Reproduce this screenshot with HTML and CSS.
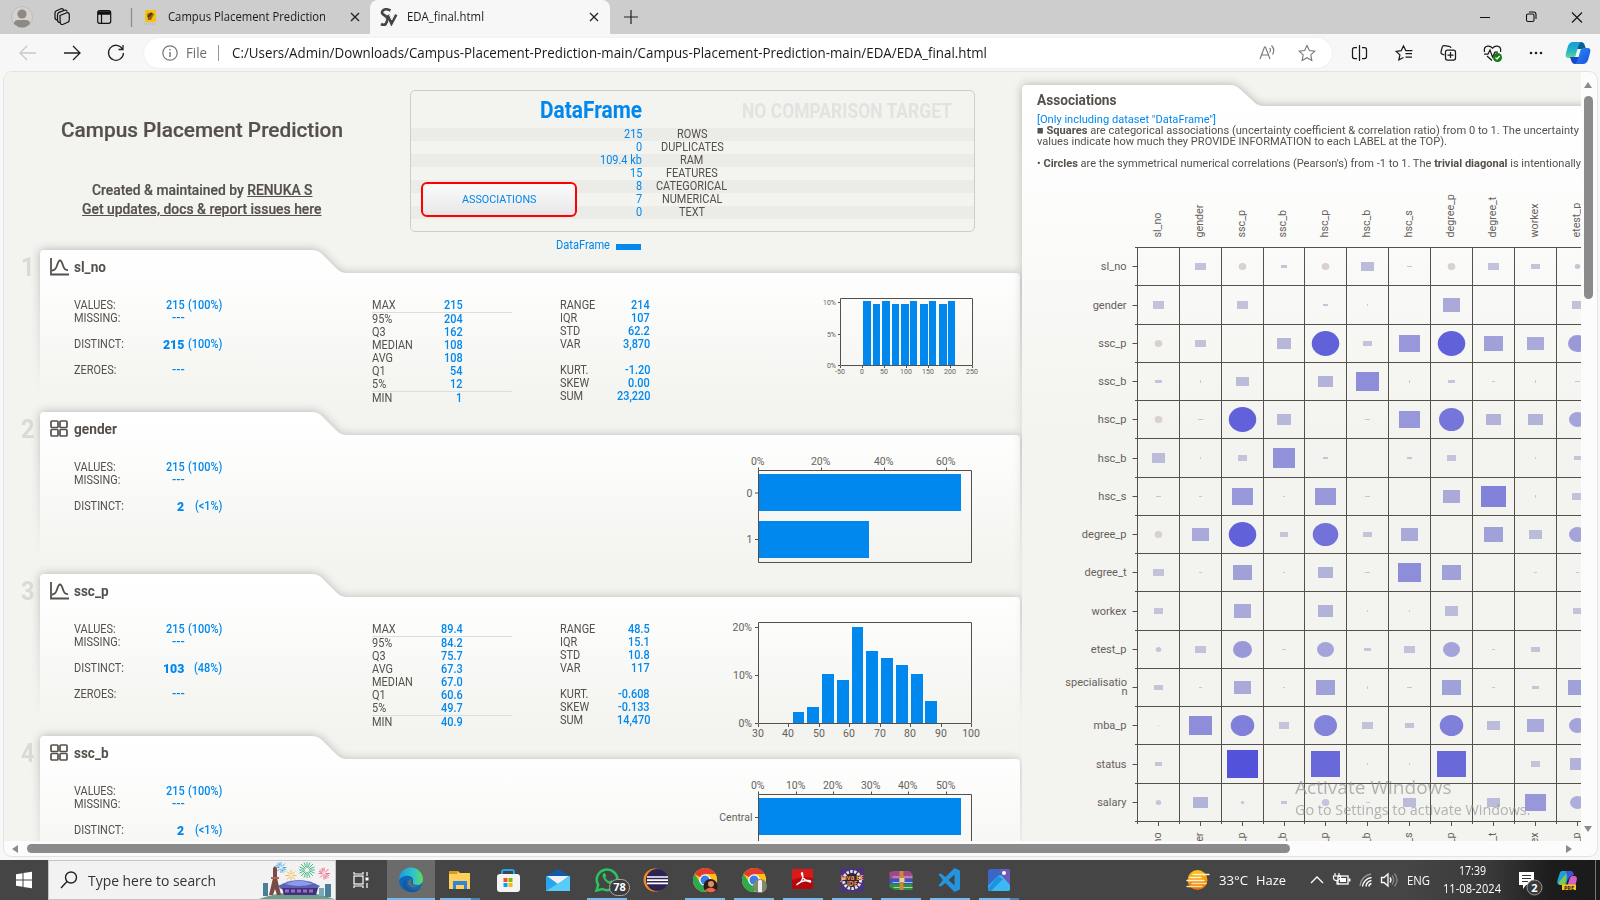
FILE: index.html
```html
<!DOCTYPE html>
<html lang="en">
<head>
<meta charset="utf-8">
<title>EDA_final.html</title>
<link rel="stylesheet" href="styles.css">
</head>
<body>
<div class="window">
  <header class="tabs">
    <svg class="tab-tools" viewBox="0 0 166 34" width="166" height="34" fill="none" stroke="#111" stroke-width="1.2">
      <circle cx="22" cy="17" r="10.5" fill="#d5d1cc" stroke="#bdb9b4" stroke-width=".8"/><circle cx="22" cy="14" r="4.6" fill="#8d8984" stroke="none"/><path d="M14 24q0-4 4-4h8q4 0 4 4q-8 7-16 0z" fill="#8d8984" stroke="none"/>
      <path d="M60 15.500l6-2.500q3-1 3.300 1.500v5q0 2-1.500 2.700l-4.600 2q-2.600 1-3-1.600z" /><path d="M60 22.500q-2.500 0-2.500-2.500v-5q0-1.800 1.600-2.600l5.400-2.200q2-.6 2.600 1.500M57.500 20q-2.500 0-2.500-2.200v-4.900q0-1.500 1.500-2.200l4.600-1.900q1.800-.6 2.500 1.200"/>
      <rect x="97.700" y="10.700" width="13" height="12.600" rx="2"/><path d="M98 13h12.500" stroke-width="3.500"/><path d="M101.500 14v9"/>
      <path d="M131.500 8v19" stroke="#8a8a8a"/>
      <path d="M145 10h11v12h-11z" fill="#f7c112" stroke="none"/><path d="M147 14q4-3 7 0l-3 6h-3z" fill="#93621a" stroke="none"/><path d="M148 17l4-4" stroke="#3a2a10"/><path d="M144 24h12" stroke="#b7a9a0" stroke-dasharray="1 1"/>
    </svg>
    <div class="tab idle"><span data-w="158">Campus Placement Prediction</span>
      <svg width="10" height="10" viewBox="0 0 10 10" stroke="#222" stroke-width="1.300"><path d="M1 1l8 8M9 1l-8 8"/></svg></div>
    <div class="tab active">
      <svg width="18" height="18" viewBox="0 0 18 18" fill="none" stroke="#444"><path d="M10.500 2.500q-5-2.500-7.500 0t1 4.500t3.500 4t-1.500 4.500t-5 .5" stroke-width="2.600"/><path d="M8 7l3.500 8L16 6.500" stroke-width="3.200"/><path d="M9.500 7l2.200 5l3-6" stroke="#f7f7f7" stroke-width="1"/></svg>
      <span data-w="77">EDA_final.html</span>
      <svg class="x" width="10" height="10" viewBox="0 0 10 10" stroke="#222" stroke-width="1.300"><path d="M1 1l8 8M9 1l-8 8"/></svg></div>
    <svg class="plus" width="14" height="14" viewBox="0 0 14 14" stroke="#222" stroke-width="1.200"><path d="M7 0v14M0 7h14"/></svg>
    <svg class="winbtns" width="120" height="34" viewBox="1480 0 120 34" fill="none" stroke="#111" stroke-width="1.100"><path d="M1480 17.500h10M1572 12.500l10 10M1582 12.500l-10 10"/><rect x="1526.500" y="14" width="7.500" height="7.500" rx="1.500"/><path d="M1529 12h4.500q2.500 0 2.500 2.500v4.500"/></svg>
  </header>
  <nav class="toolbar">
    <svg width="140" height="38" viewBox="0 34 140 38" fill="none" stroke="#222" stroke-width="1.300"><path d="M36 53h-16m7-7l-7 7l7 7" stroke="#c9c9c9"/><path d="M64 53h16m-7-7l7 7l-7 7"/><path d="M122.500 49a7.500 7.500 0 1 0 1 4M123 45v4.500h-4.500"/></svg>
    <div class="address">
      <svg width="16" height="16" viewBox="0 0 16 16" fill="none" stroke="#767676" stroke-width="1.200"><circle cx="8" cy="8" r="7.200"/><path d="M8 7v5M8 4v1.500" stroke-width="1.400"/></svg>
      <span class="scheme" data-w="21">File</span><i></i>
      <span class="url" data-w="755">C:/Users/Admin/Downloads/Campus-Placement-Prediction-main/Campus-Placement-Prediction-main/EDA/EDA_final.html</span>
      <svg class="addr-icons" width="60" height="20" viewBox="1258 43 60 20" fill="none" stroke="#777" stroke-width="1.100"><path d="M1260 59l4.500-12h1l4.500 12M1262 55h7M1269.500 48q2 2 0 4.500M1271.500 45.500q4 4 1 9"/><path d="M1307 45.500l2.400 5l5.400.7l-4 3.700l1 5.500l-4.800-2.700l-4.800 2.700l1-5.500l-4-3.700l5.400-.7z"/></svg>
    </div>
    <svg class="right-tools" width="256" height="38" viewBox="1344 34 256 38" fill="none" stroke="#1a1a1a" stroke-width="1.250">
      <path d="M1357 47.500h-2.500q-2 0-2 2v7q0 2 2 2h2.500M1362 47.500h2.500q2 0 2 2v7q0 2-2 2h-2.500M1359.500 45v16"/>
      <path d="M1403.500 57.500l-4.600 2.400l1-5l-3.700-3.500l5-.7l2.300-4.700l2.400 4.700h6.500M1405.500 53.500h6.500M1405.500 57h6.500"/>
      <path d="M1444.500 55l-2.300-.8q-1.500-.6-1.200-2.200l1.200-4.800q.5-1.700 2-1.500l5 .6q1.500.2 1.800 1.700"/><rect x="1445.500" y="50" width="10" height="10" rx="2"/><path d="M1450.500 52v6M1447.500 55h6"/>
      <path d="M1484.500 52q-1-5 3-5.800q3-.4 5 2q2-2.400 5-2q4 .8 3 5.800M1484 54h4l2-4l2.500 7l2.500-5h3M1487 56l5 4.500"/><circle cx="1497.500" cy="57.500" r="4.500" fill="#107c10" stroke="none"/><path d="M1495.500 57.500l1.500 1.500l2.700-3" stroke="#fff"/>
      <g fill="#222" stroke="none"><circle cx="1531" cy="53" r="1.300"/><circle cx="1536" cy="53" r="1.300"/><circle cx="1541" cy="53" r="1.300"/></g>
      <defs><linearGradient id="cpa" x1="0" y1="0" x2="0" y2="1"><stop offset="0" stop-color="#169ae0"/><stop offset=".6" stop-color="#25b8c5"/><stop offset="1" stop-color="#6bd68a"/></linearGradient><linearGradient id="cpb" x1="0" y1="0" x2="1" y2="1"><stop offset="0" stop-color="#2c8df0"/><stop offset="1" stop-color="#1b4fe0"/></linearGradient></defs>
      <g stroke="none"><path d="M1574 42h7q3 0 4 4l1 3h-10z" fill="#0b5e93"/><path d="M1573 42h8q-2 1-3 5l-2.500 9q-1 2-3 2h-4q-4 0-2.500-5l2-7q1.500-4 5-4z" fill="url(#cpa)"/><path d="M1582 64h-7q-3 0-4-4l-1-3h10z" fill="#1747c8"/><path d="M1583 64h-8q2-1 3-5l2.500-9q1-2 3-2h4q4 0 2.500 5l-2 7q-1.500 4-5 4z" fill="url(#cpb)"/></g>
    </svg>
  </nav>

  <main class="viewport">
    <div class="page">
      <div class="left">
        <section class="intro">
          <div class="headline">
            <h1><span data-w="282">Campus Placement Prediction</span></h1>
            <p><span data-w="220.500">Created &amp; maintained by <u>RENUKA S</u></span></p>
            <p><span data-w="239.500"><u>Get updates, docs &amp; report issues here</u></span></p>
          </div>
          <div class="summary-wrap">
            <div class="summary">
              <div class="sum-head"><b class="df"><span data-w="102">DataFrame</span></b><b class="nocomp"><span data-w="210">NO COMPARISON TARGET</span></b></div>
              <div class="sum-rows" id="sumRows"></div>
              <button class="assoc-btn"><span data-w="74.500">ASSOCIATIONS</span></button>
            </div>
            <div class="legend"><span data-w="54">DataFrame</span><i></i></div>
          </div>
        </section>
        <section class="cards" id="cards"></section>
      </div>
      <aside class="assoc">
        <svg class="folder" width="570" height="780" viewBox="1010 72 570 780"><path class="folder-shadow" filter="url(#soft)" d="M1022 840V89q0-4 4-4H1230q6 0 10 4l14 13q4 4 10 4H1600V840z"/><path fill="url(#afill)" d="M1022 860V89q0-4 4-4H1230q6 0 10 4l14 13q4 4 10 4H1600V860z"/></svg>
        <div class="assoc-text">
          <h2><span data-w="79.500">Associations</span></h2>
          <p class="blue"><span data-w="179">[Only including dataset "DataFrame"]</span></p>
          <p><span data-w="542">■ <b>Squares</b> are categorical associations (uncertainty coefficient &amp; correlation ratio) from 0 to 1. The uncertainty</span></p>
          <p><span data-w="410">values indicate how much they PROVIDE INFORMATION to each LABEL at the TOP).</span></p>
          <p>&nbsp;</p>
          <p><span data-w="544">• <b>Circles</b> are the symmetrical numerical correlations (Pearson's) from -1 to 1. The <b>trivial diagonal</b> is intentionally</span></p>
        </div>
        <svg id="matrix" class="matrix" width="559" height="666" viewBox="1022 175 559 666"></svg>
      </aside>
    </div>
    <div class="vbar"><b class="up"></b><i></i><b class="down"></b></div>
    <div class="hbar"><b class="lft"></b><i></i><b class="rgt"></b></div>
    <div class="watermark"><p class="w1"><span data-w="156.500">Activate Windows</span></p><p class="w2"><span data-w="235.500">Go to Settings to activate Windows.</span></p></div>
  </main>

  <footer class="taskbar">
    <svg class="start" width="48" height="40" viewBox="0 860 48 40" fill="#fff"><path d="M16 874.200l6.500-1v6.300H16zM23.500 873l8.500-1.200v7.700h-8.500zM16 880.500h6.500v6.300l-6.500-1zM23.500 880.500H32v7.700l-8.500-1.200z"/></svg>
    <div class="search">
      <svg width="18" height="18" viewBox="0 0 18 18" fill="none" stroke="#222" stroke-width="1.400"><circle cx="11" cy="6.500" r="5.500"/><path d="M7 10.500L1 17"/></svg>
      <span data-w="128">Type here to search</span>
      <svg class="fest" width="76" height="38" viewBox="258 861 76 38">
        <path d="M258 899q38-14 75 0z" fill="#6f9c8e"/><path d="M262 883h5v13h-5zM324 884h6v13h-6z" fill="#4a7f97"/><path d="M318 888h5v8h-5z" fill="#7aa8b8"/>
        <path d="M272 868l2-2l2 2v10l4 17h-4l-2-6l-2 6h-4l4-17z" fill="#7a4b45"/><path d="M270 877h8v2h-8z" fill="#b0635a"/>
        <path d="M277 886q21-12 42 0l-3 3h-36z" fill="#5a62b8"/><path d="M284 884q14-7 28 0q-14 4-28 0z" fill="#8c9be8"/><path d="M281 888h36l-2 7h-32z" fill="#3d3478"/><path d="M284 891h4m2 0h4m2 0h4m2 0h4m2 0h4" stroke="#a469c8" stroke-width="3"/>
        <g fill="none"><path stroke="#4aa3e0" stroke-width=".9" d="M280 862v4m0 3v4M274.500 867.500h4m3 0h4M276 863.500l3 3m2 2l3 3M284 863.500l-3 3m-2 2l-3 3M277.700 862.300l1.200 3M282.300 872.700l-1.200-3M274.800 865.300l3 1.200M285.200 869.700l-3-1.200"/>
        <path stroke="#35b57a" stroke-width=".9" d="M306 862v6m0 4v6M298 870h6m4 0h6M300 864l4.500 4.500m3 3L312 876M312 864l-4.500 4.500m-3 3L300 876M303 862.500l2 5M309 877.500l-2-5M309 862.500l-2 5M303 877.500l2-5M298.500 867l5 2M313.500 873l-5-2M313.500 867l-5 2M298.500 873l5-2"/>
        <path stroke="#f2b84b" stroke-width="1" d="M290 870v4m0 3v4M284.500 875.500h4m3 0h4M286 871.500l3 3m2 2l3 3M294 871.500l-3 3m-2 2l-3 3"/>
        <path stroke="#ef5f78" stroke-width=".9" d="M323 867.500v4m0 3v5M317.500 873.500h4m3 0h4.500M319 869.500l3 3m2 2l3.500 3.500M327.500 869l-3.500 3.500m-2 2l-3 3M320.800 868l1.200 3M325.200 879l-1.200-3M317.800 871.300l3 1.200M328.200 875.700l-3-1.200"/></g>
      </svg>
    </div>
    <svg class="apps" width="849" height="40" viewBox="336 860 849 40">
      <defs>
        <linearGradient id="eg" x1="0" y1="0" x2="1" y2="0"><stop offset="0" stop-color="#1b9be0"/><stop offset=".6" stop-color="#2fc4c9"/><stop offset="1" stop-color="#5fdc5a"/></linearGradient>
        <linearGradient id="wx" x1="0" y1="0" x2="0" y2="1"><stop offset="0" stop-color="#ffc814"/><stop offset="1" stop-color="#ea6a10"/></linearGradient>
        <g id="chrome"><circle r="12" fill="#fbc116"/><path d="M0 0L-10.400-6A12 12 0 0 1 10.400-6z" fill="#e33b2e"/><path d="M-10.400-6A12 12 0 0 0 0 12L5.200 3L-4 4z" fill="#2da94f"/><path d="M0-6H10.400A12 12 0 0 1 0 12L5.200 3z" fill="#fbc116"/><circle r="5.800" fill="#fff"/><circle r="4.500" fill="#3b7ded"/></g>
      </defs>
      <g fill="none" stroke="#fff" stroke-width="1.200"><rect x="354" y="876" width="9" height="8"/><path d="M354 872v2h9v-2M354 888v-2h9v2M367 872v4M367 883v5"/><path d="M367 877.500v3" stroke-width="3"/></g>
      <path d="M387 860h48v40h-48z" fill="#6b6b6b"/>
      <circle cx="411" cy="880" r="12" fill="#0f67b5"/><path d="M399 880a12 12 0 0 1 24-1q0 6-6 6q-5 0-4-3q1-5-4-6q-6-1-10 4z" fill="url(#eg)"/><path d="M406 880q-1 8 7 10q4 1 8-2q-4 5-11 4q-8-3-7-9q1-3 3-3z" fill="#1656a0"/><path d="M412 879q-1 3-1 4q2 4 9 2q-8 5-12-1q-1-4 4-5z" fill="#6b6b6b"/>
      <path d="M449 871h9l2 2h10v16h-21z" fill="#ffd05c"/><path d="M449 871h9l-1 3h-8z" fill="#d99a20"/><path d="M453 881h14v8h-3v-4h-8v4h-3z" fill="#2f86d8"/>
      <path d="M502 875v-3q0-2 2-2h8q2 0 2 2v3" fill="none" stroke="#22a5ec" stroke-width="2"/><rect x="497" y="874" width="23" height="18" rx="3" fill="#f4f4f4"/><path d="M503.500 878h4v4h-4z" fill="#f25022"/><path d="M508.500 878h4v4h-4z" fill="#7fba00"/><path d="M503.500 883h4v4h-4z" fill="#00a4ef"/><path d="M508.500 883h4v4h-4z" fill="#ffb900"/>
      <path d="M546 876l12-7l12 7z" fill="#0f5cab"/><path d="M546 876h24v15h-24z" fill="#27a5ea"/><path d="M547 876h22l-11 8z" fill="#f2f2f2"/><path d="M546 891l24-15v15z" fill="#58ccf8"/>
      <path d="M596.500 890.500l1.700-5.500a10.300 10.300 0 1 1 4.300 4z" fill="none" stroke="#28c65a" stroke-width="2.500"/><path d="M603 874q1-2 2.500 0l.7 2l-1 1.500q1.500 3 4.300 4l1.500-1.200l2.500 1q1 1-1 2.400q-3 1.500-7.500-3q-3.600-4.700-2-6.700z" fill="#28c65a"/><rect x="609.500" y="879.500" width="20" height="16" rx="8" fill="#3c3c3c" stroke="#aaa"/><text x="619.500" y="891" class="badge" text-anchor="middle">78</text>
      <circle cx="655" cy="880" r="11.500" fill="#f28a22"/><circle cx="657" cy="880" r="11" fill="#2d2354"/><path d="M647 877h21M647 880.200h21M647 883.400h21" stroke="#fff" stroke-width="1.700"/>
      <use href="#chrome" x="705" y="880"/><circle cx="710.500" cy="886" r="7" fill="#2c1a18"/><circle cx="711" cy="884" r="3" fill="#d9906d"/><path d="M705 890q6-5 11 0q-5 5-11 0z" fill="#e46a4a"/>
      <use href="#chrome" x="754" y="880"/><circle cx="760" cy="886" r="7" fill="#7e8a6c"/><path d="M758 881q2.500-3 4 0v11h-4z" fill="#f1ecf2"/>
      <path d="M792 869h21v20h-21z" fill="#b5080b"/><path d="M792 869h21v9q-11-2-21 2z" fill="#d91a18"/><path d="M796.500 885q8-4 6-12q-1-1-1 1q2 7 9 8q1-2-4-1.500q-6 .5-10 4.500z" fill="none" stroke="#fff" stroke-width="1.300"/>
      <path d="M840 868h24v24h-24z" fill="#4b357a"/><circle cx="852" cy="880" r="8.500" fill="#2a2340" stroke="#e4e4e4" stroke-width="3" stroke-dasharray="2.500 1.300"/><text x="852" y="879.500" class="jee" text-anchor="middle" textLength="23" lengthAdjust="spacingAndGlyphs">Java EE</text><text x="852" y="885.500" class="jee" text-anchor="middle">IDE</text>
      <g transform="translate(11.500 0)"><path d="M878 872l5-1h15l3 3v5h-23z" fill="#a0488c"/><path d="M878 879h23v5h-23z" fill="#3556c4"/><path d="M878 884h23v6h-18l-5-3z" fill="#2f8f43"/><path d="M881 877h20M881 882.500h20M882 887.500h19" stroke="#ddd" stroke-width=".8"/><path d="M888 871h4v19h-4z" fill="#c98a3a"/><path d="M888 878h5v4h-5z" fill="#f0d48c"/></g>
      <path d="M956 868l5.500 2.500v19l-5.500 2.500l-9-9l-5 3.800l-2-1.300l4.500-5.500l-4.500-5.500l2-1.300l5 3.800zM956 874.500l-6 5.500l6 5.500z" fill="#2394e0" fill-rule="evenodd" transform="translate(-1.500 0)"/>
      <g transform="translate(-14 0)"><rect x="1002" y="869" width="22" height="22" rx="2.500" fill="#3a66c8"/><path d="M1013 869h9q2 0 2 2v14l-7-5z" fill="#6e58b8"/><path d="M1002 886l10-10q2-1.500 4 0l8 9v4q0 2-2 2h-18q-2 0-2-2z" fill="#3cb9f0"/><path d="M1002 888l10-12l5 3l-12 12q-3 0-3-3z" fill="#1c93e0"/><circle cx="1018" cy="873" r="2" fill="#fff"/></g>
      <path d="M387 899h48M440 899h31M587 899h40M685 899h40M734 899h40M783 899h40M832 899h40M881 899h40M930 899h40M979 899h31" stroke="#76b9ed" stroke-width="2"/><path d="M471 899h9M1010 899h9" stroke="#4d82ad" stroke-width="2"/>
    </svg>
    <div class="weather"><svg width="26" height="24" viewBox="1185 868 26 24"><circle cx="1197.500" cy="880" r="10" fill="url(#wx)"/><path d="M1193 874.500h16M1187 880.500h17M1190 877.500h11" stroke="#fff3cf" stroke-width="1.400" stroke-linecap="round"/><path d="M1187 886.500h15M1192 883.500h14" stroke="#f8dfa0" stroke-width="1.300" stroke-linecap="round"/></svg>
      <span data-w="29">33°C</span><span data-w="30">Haze</span></div>
    <svg class="tray" width="92" height="40" viewBox="1306 860 92 40" fill="none" stroke="#fff" stroke-width="1.300"><path d="M1311 883l6-6l6 6"/><rect x="1338" y="876" width="10" height="8"/><path d="M1349.500 878.500v3" stroke-width="2"/><path d="M1340 878h6v4h-6z" fill="#fff" stroke="none"/><path d="M1335 873v3m4-3v3m-5.500 0h7v2q-3 3-3.500 2.500q-3.500 0-3.500-2.500zM1337 880v4h2" stroke-width="1.200"/><g stroke-width="1.400"><path d="M1360 886a13 13 0 0 1 11-12" stroke="#999"/><path d="M1362.500 886.500a10 10 0 0 1 9-9M1366 886.500a6 6 0 0 1 5.500-6M1369 886.500a3 3 0 0 1 2.500-3"/></g><path d="M1381.500 877.500h2.500l4-3.500v12l-4-3.500h-2.500z"/><path d="M1390 877.500q2 2.500 0 5"/><path d="M1392 875.500q3.500 4.500 0 9M1394.500 873.500q5 6.500 0 13" stroke="#888"/></svg>
    <span class="lang" data-w="23">ENG</span>
    <div class="clock"><span data-w="27">17:39</span><span data-w="58">11-08-2024</span></div>
    <svg class="endicons" width="88" height="40" viewBox="1512 860 88 40"><path d="M1519 872h15v13h-8l-3 4v-4h-4z" fill="#fff"/><path d="M1522 875.500h9M1522 878.500h9M1522 881.500h6" stroke="#333"/><circle cx="1534.500" cy="887.500" r="7.500" fill="#3a3a3a" stroke="#999"/><text x="1534.500" y="891.500" class="badge" text-anchor="middle">2</text>
      <path d="M1562 871h8l-4 14h-5q-5 0-3.500-5l2-6q.5-3 2.500-3z" fill="#1fa0d8"/><path d="M1559 882l8-9l-2 12h-4q-3 0-2-3z" fill="#7fca4a"/><path d="M1572 876h2q4 0 2.500 5l-1 4h-8l2-6q1-3 2.500-3z" fill="#d45fc8"/><path d="M1566 871h5q2 0 3 4l-3 1q-2 1-3 4z" fill="#3a57d8"/><path d="M1562 884.500h14v5.500h-14z" fill="#ffc21a"/><text x="1569" y="889.500" class="pre" text-anchor="middle">PRE</text><path d="M1595.500 860v40" stroke="#777"/></svg>
  </footer>
</div>
<svg width="0" height="0" class="defs"><defs>
  <filter id="soft" x="-10%" y="-10%" width="120%" height="120%"><feGaussianBlur stdDeviation="5"/></filter>
  <linearGradient id="cfill" x1="0" y1="0" x2="0" y2="1"><stop offset="0" stop-color="#fff"/><stop offset=".15" stop-color="#fefefe"/><stop offset=".95" stop-color="#f3f3ef"/></linearGradient>
  <linearGradient id="cshadow" x1="0" y1="0" x2="0" y2="1"><stop offset="0" stop-color="#000" stop-opacity=".28"/><stop offset=".9" stop-color="#000" stop-opacity="0"/></linearGradient>
  <linearGradient id="afill" gradientUnits="userSpaceOnUse" x1="0" y1="85" x2="0" y2="430"><stop offset="0" stop-color="#fff"/><stop offset=".2" stop-color="#fefefe"/><stop offset="1" stop-color="#f3f3ef"/></linearGradient>
</defs></svg>
<script src="script.js"></script>
</body>
</html>
```
FILE: styles.css
```css
* { box-sizing: border-box; }
html, body { margin: 0; height: 100%; overflow: hidden; }
body { font-family: Roboto, "Liberation Sans", sans-serif; color: #55504b; }
h1, h2, p { margin: 0; }
svg { display: block; flex: none; }
.defs { position: absolute; }
.window { width: 1600px; height: 900px; display: flex; flex-direction: column; background: #f7f7f7; overflow: hidden; }
.sq { display: inline-block; white-space: nowrap; }
.sq > span { display: inline-block; transform-origin: 0 50%; }

.tabs { height: 34px; flex: none; display: flex; align-items: center; background: #cdcdcd; font: 12.500px "Open Sans", sans-serif; color: #1b1b1b; }
.tab { display: flex; align-items: center; height: 34px; }
.tab .sq { margin-top: -1px; }
.idle { width: 204px; padding-left: 2px; gap: 24px; }
.active { width: 240px; background: #f7f7f7; border-radius: 8px 8px 0 0; padding-left: 10px; gap: 9px; }
.active .x { margin-left: 96px; }
.plus { margin-left: 14px; }
.winbtns { margin-left: auto; }

.toolbar { height: 38px; flex: none; display: flex; align-items: center; }
.address { margin-left: 4px; width: 1188px; height: 30px; border-radius: 15px; background: #fff; display: flex; align-items: center; padding-left: 18px; font: 14.500px "Open Sans", sans-serif; color: #1b1b1b; box-shadow: 0 0 2px #e4e4e4; }
.address .sq { margin-top: -1px; }
.scheme { margin-left: 8px; color: #6c6c6c; }
.address i { width: 1px; height: 16px; background: #999; margin: 0 13px 0 11px; }
.addr-icons { margin-left: auto; margin-right: 14px; }
.right-tools { margin-left: 12px; }

.viewport { position: relative; height: 784px; margin: 0 3px 0 4px; background: #fcfcfc; border-radius: 8px; overflow: hidden; display: grid; grid-template: 769px 15px / 1577px 16px; flex: none; box-shadow: 0 0 0 1px #e3e3e3; }
.page { background: #f3f3ef; overflow: hidden; display: flex; }
.left { width: 1018px; flex: none; }
.intro { display: flex; height: 178px; }
.headline { width: 396px; flex: none; padding-top: 43px; text-align: center; -webkit-text-stroke: .2px; }
.headline h1 { font-size: 21px; font-weight: 500; line-height: 30px; }
.headline p { font-size: 14.500px; font-weight: 500; line-height: 19px; }
.headline h1 + p { margin-top: 36px; }
.summary-wrap { padding: 18px 0 0 10px; }
.summary { position: relative; width: 565px; height: 142px; border: 1px solid #d2cbc8; border-radius: 5px; }
.sum-head { display: flex; height: 37px; line-height: 40px; }
.df { width: 231px; text-align: right; font-size: 23px; color: #0088ee; }
.nocomp { width: 310px; text-align: right; font-size: 20px; color: #e2e2e1; }
.sum-rows div { display: grid; grid-template-columns: 231px 100px; height: 13px; line-height: 13px; font-size: 12px; }
.sum-rows div:nth-child(odd) { background: #ebebe8; }
.sum-rows div > :first-child { text-align: right; color: #0088ee; }
.sum-rows div > :last-child { text-align: center; }
.assoc-btn { position: absolute; left: 10px; top: 91px; width: 156px; height: 35px; border: 2px solid #f00; border-radius: 6px; background: linear-gradient(#fbfbfb, #e7e7e7); color: #0088ee; font: 11px Roboto, sans-serif; padding: 0; }
.legend { display: flex; align-items: center; gap: 6px; padding-left: 146px; margin-top: 5px; font-size: 12px; line-height: 17px; color: #0088ee; }
.legend i { width: 25px; height: 6px; background: #0088ee; margin-top: 3px; }

.cards { display: grid; grid-auto-rows: 162px; }
.card { position: relative; display: grid; grid-template-columns: 46px 24px 298px 188px 90px 1fr; grid-template-rows: 49px 1fr; }
.folder { position: absolute; left: 16px; top: -20px; overflow: visible; }
.assoc .folder { left: -12px; top: 0; }
.card > .folder { left: 36px; top: 0; }
.folder-shadow { fill: url(#cshadow); }
.num { grid-column: 1; grid-row: 1; padding-left: 17px; font-size: 26px; font-weight: 700; color: #d9d9d8; line-height: 35px; position: relative; }
.name { grid-column: 2 / -1; grid-row: 1; position: relative; display: flex; gap: 5px; font-size: 15.500px; font-weight: 700; line-height: 34px; }
.name svg { margin-top: 8px; }
.col { position: relative; font-size: 12px; line-height: 13px; color: #55504b; }
.row { display: grid; height: 13px; }
.a { grid-column: 3; grid-row: 2; }
.a .row { grid-template-columns: 60px 50.500px 37.500px; }
.b { grid-column: 4; grid-row: 2; width: 140px; }
.b .row { grid-template-columns: 45px 45.500px; }
.c { grid-column: 5; grid-row: 2; }
.c .row { grid-template-columns: 45px 45px; }
.v { text-align: right; color: #0088ee; }
.col .v { font-weight: 500; }
.col .big { font-weight: 900; font-size: 13.500px; }
.rule { border-bottom: 1px solid #ddd; height: 14px; }
.plot { grid-column: 6; grid-row: 1 / 3; position: relative; }
.plot svg { overflow: visible; }
.plot text, .matrix text { font-family: Roboto, sans-serif; fill: #66615c; }
.plot text { font-size: 10.500px; }
.plot text.s { font-size: 7px; }
.matrix text { font-size: 11px; }
.matrix text.up { font-size: 10.700px; }

.assoc { position: relative; width: 559px; flex: none; }
.assoc-text { position: relative; padding: 18px 0 0 15px; height: 103px; font-size: 11.500px; line-height: 11px; white-space: nowrap; }
.assoc-text h2 { font-size: 15px; line-height: 20px; margin-bottom: 3px; }
.assoc-text .blue { color: #0088ee; line-height: 12px; }
.matrix { position: relative; }

.vbar { display: flex; flex-direction: column; align-items: center; padding: 10px 2px 0 0; }
.vbar i { width: 9px; height: 203px; border-radius: 5px; background: #8b8b8b; margin-top: 8px; }
.vbar b, .hbar b { border: 4.500px solid transparent; }
.vbar .up { border-top: 0; border-bottom: 6px solid #8b8b8b; }
.vbar .down { border-bottom: 0; border-top: 6px solid #8b8b8b; margin-top: auto; margin-bottom: 9px; }
.hbar { grid-column: 1 / 3; display: flex; align-items: center; padding-left: 8px; }
.hbar i { width: 1263px; height: 9px; border-radius: 5px; background: #8b8b8b; margin: -1px 276px 0 9px; }
.hbar .lft { border-left: 0; border-right: 6px solid #8b8b8b; }
.hbar .rgt { border-right: 0; border-left: 6px solid #8b8b8b; }
.watermark { position: absolute; left: 1291px; top: 700px; color: rgba(150,150,150,.7); font-family: "Open Sans", sans-serif; white-space: nowrap; }
.w1 { font-size: 18.500px; line-height: 30px; }
.w2 { font-size: 15px; line-height: 15px; }

.taskbar { margin-top: 4px; height: 40px; flex: none; display: flex; align-items: center; background: linear-gradient(90deg, #454545 0, #454545 88%, #3a3a3a 93%, #1c1c1c 97%, #1a1a1a); color: #fff; font: 13px "Open Sans", sans-serif; }
.search { width: 288px; flex: none; height: 40px; background: #f2f2f2; border: 1px solid #c4c4c4; display: flex; align-items: center; padding-left: 11px; gap: 10px; color: #333; font-size: 15px; }
.fest { margin-left: auto; }
.badge { font: 700 11px "Open Sans", sans-serif; fill: #fff; }
.jee { font: 700 6.500px "Open Sans", sans-serif; fill: #f29340; }
.pre { font: 700 5.500px "Open Sans", sans-serif; fill: #222; }
.weather { display: flex; align-items: center; gap: 8px; }
.tray { margin-left: 20px; }
.lang { margin-left: 9px; }
.clock { width: 80px; margin-left: 2px; display: flex; flex-direction: column; align-items: center; font-size: 12px; line-height: 18px; }
.endicons { margin-left: auto; }
```
FILE: script.js
```js
const q = (t, cls = '') => `<span class="${cls}" data-s="${t === '---' ? 1.05 : .91}">${t}</span>`;

document.getElementById('sumRows').innerHTML = [
  ['215', 'ROWS'], ['0', 'DUPLICATES'], ['109.4 kb', 'RAM'], ['15', 'FEATURES'],
  ['8', 'CATEGORICAL'], ['7', 'NUMERICAL'], ['0', 'TEXT']
].map(r => `<div><span>${q(r[0])}</span><span>${q(r[1])}</span></div>`).join('');

/* Charts are described in page coordinates; each svg's viewBox selects its card. */
const INK = '#55504b', BLUE = '#0088ee';
const line = d => `<path d="${d}" fill="none" stroke="${INK}"/>`;
const label = (x, y, t, a = 'middle', c = '') => `<text x="${x}" y="${y}" text-anchor="${a}" class="${c}">${t}</text>`;
const bar = (x, y, w, h) => `<rect x="${x}" y="${y}" width="${w}" height="${h}" fill="${BLUE}"/>`;

function chart1() {
  const xs = [863, 873, 882, 892, 901, 910, 920, 929, 939, 948], hi = [1, 0, 1, 0, 0, 1, 0, 1, 0, 1];
  let s = xs.map((x, i) => bar(x, hi[i] ? 301 : 304, i % 2 ? 7 : 8, hi[i] ? 64.500 : 61.500)).join('');
  s += line('M840.500 298.500H972.500V365.500H840.500zM838 302.500h2M838 334.500h2M838 365.500h2');
  [840.500, 862.500, 884.500, 906.500, 928.500, 950.500, 972.500].forEach((x, i) => s += line(`M${x} 366v2`) + label(x - .5, 374, -50 + 50 * i, 'middle', 's'));
  return s + label(836, 305, '10%', 'end', 's') + label(836, 337, '5%', 'end', 's') + label(836, 368, '0%', 'end', 's');
}
function hbars(top, ticks, rows, step) {
  let s = rows.map(r => bar(758.500, top + r[1], r[2], 37)).join('');
  s += step === 20 ? line(`M758.500 ${top}H971.500V${top + 92}H758.500z`) : line(`M758.500 841V${top}H971.500V841`);
  ticks.forEach((x, i) => s += line(`M${x} ${top - 3}v3`) + label(x - .8, top - 5.500, i * step + '%'));
  rows.forEach(r => s += line(`M755 ${top + r[3]}h3`) + label(752.500, top + r[3] + 3.500, r[0], 'end'));
  return s;
}
function chart3() {
  let s = [[793, 11, 712], [807, 12, 707], [822, 12, 674], [837, 12, 680], [852, 11, 627], [866, 12, 651], [881, 12, 658], [896, 12, 665], [911, 12, 674], [925, 12, 701]]
    .map(b => bar(b[0], b[2], b[1], 723.500 - b[2])).join('');
  s += line('M758.500 622.500H971.500V723.500H758.500zM755 627.500h3M755 675.500h3M755 723.500h3');
  [758.500, 788.500, 819.500, 849.500, 880.500, 910.500, 941.500, 971.500].forEach((x, i) => s += line(`M${x} 724v3`) + label(x - .5, 737, 30 + i * 10));
  return s + label(752, 631, '20%', 'end') + label(752.500, 679, '10%', 'end') + label(752, 727, '0%', 'end');
}

const NUM = `<svg width="19" height="18" viewBox="0 0 19 18" fill="none" stroke="${INK}" stroke-width="1.800"><path d="M1 0v16.500h18M2 12.500q3.500 0 5-5t3-5t3 5t5 4.500"/></svg>`;
const CAT = `<svg width="19" height="18" viewBox="0 0 19 18" fill="none" stroke="${INK}" stroke-width="1.700"><rect x="1" y="1" width="7" height="6.500" rx="1"/><rect x="10" y="1" width="7" height="6.500" rx="1"/><rect x="1" y="9.500" width="7" height="6.500" rx="1"/><rect x="10" y="9.500" width="7" height="6.500" rx="1"/></svg>`;

const cards = [
  { name: 'sl_no', w: 32, icon: NUM, distinct: ['215', '(100%)'], zero: 1, plot: chart1(),
    b: [['MAX', '215'], ['95%', '204'], ['Q3', '162'], ['MEDIAN', '108'], ['AVG', '108'], ['Q1', '54'], ['5%', '12'], ['MIN', '1']],
    c: [['RANGE', '214'], ['IQR', '107'], ['STD', '62.2'], ['VAR', '3,870'], ['', ''], ['KURT.', '-1.20'], ['SKEW', '0.00'], ['SUM', '23,220']] },
  { name: 'gender', w: 43, icon: CAT, distinct: ['2', '(&lt;1%)'], plot: hbars(470.500, [758.500, 821.500, 884.500, 946.500], [['0', 3.500, 202.500, 22.500], ['1', 50.500, 110.500, 69]], 20) },
  { name: 'ssc_p', w: 34.500, icon: NUM, distinct: ['103', '(48%)'], zero: 1, plot: chart3(),
    b: [['MAX', '89.4'], ['95%', '84.2'], ['Q3', '75.7'], ['AVG', '67.3'], ['MEDIAN', '67.0'], ['Q1', '60.6'], ['5%', '49.7'], ['MIN', '40.9']],
    c: [['RANGE', '48.5'], ['IQR', '15.1'], ['STD', '10.8'], ['VAR', '117'], ['', ''], ['KURT.', '-0.608'], ['SKEW', '-0.133'], ['SUM', '14,470']] },
  { name: 'ssc_b', w: 34.500, icon: CAT, distinct: ['2', '(&lt;1%)'], plot: hbars(794.500, [758.500, 796.500, 833.500, 871.500, 908.500, 946.500], [['Central', 3.500, 202.500, 23]], 10) }
];
const SHAPE = 'M0 162V4q0-4 4-4H272q6 0 10 4l15 15q4 4 10 4H976q4 0 4 4V162z';
document.getElementById('cards').innerHTML = cards.map((c, i) => {
  const rowA = (l, v, p = '', k = '') => `<div class="row"><span>${q(l)}</span><span class="v ${k}">${q(v)}</span><span class="v">${q(p)}</span></div>`;
  const gap = '<div class="row"></div>';
  const pair = (r, k = '') => `<div class="row ${k}"><span>${q(r[0])}</span><span class="v">${q(r[1])}</span></div>`;
  return `<article class="card">
    <svg class="folder" width="980" height="162" viewBox="0 0 980 162"><path class="folder-shadow" filter="url(#soft)" d="${SHAPE}"/><path fill="url(#cfill)" d="${SHAPE}"/></svg>
    <div class="num">${q(i + 1)}</div>
    <div class="name">${c.icon}<span data-w="${c.w}">${c.name}</span></div>
    <div class="col a">${rowA('VALUES:', '215', '(100%)')}${rowA('MISSING:', '---')}${gap}${rowA('DISTINCT:', c.distinct[0], c.distinct[1], 'big')}${gap}${c.zero ? rowA('ZEROES:', '---') : ''}</div>
    ${c.b ? `<div class="col b">${c.b.map((r, j) => pair(r, j === 0 || j === 6 ? 'rule' : '')).join('')}</div><div class="col c">${c.c.map(r => pair(r)).join('')}</div>` : ''}
    <div class="plot"><svg width="360" height="162" viewBox="650 ${250 + 162 * i} 360 162">${c.plot}</svg></div>
  </article>`;
}).join('');

/* Association matrix: "WxH" rectangle, "cWxH" circle, "g" near-zero circle. */
const names = ['sl_no', 'gender', 'ssc_p', 'ssc_b', 'hsc_p', 'hsc_b', 'hsc_s', 'degree_p', 'degree_t', 'workex', 'etest_p', 'specialisation', 'mba_p', 'status', 'salary'];
const grid = `
- 11x7 g 6x3 g 13x9 5x1 g 11x7 9x5 c5.5x5
11x8 - 11x8 - 5x2 1x2 - 17x14 - - 11x8
g 11x7 - 14x11 c27.5x25 9x5 21x17 c27.5x25.1 19x15 17x13 c19x17
7x3 1x3 13x9 - 15x11 23x19 1x3 7x3 3x1 1x3 5x1
g 5x1 c27.5x25 14x11 - 5x1 21x17 c25x23 15x11 15x11 c17x15
13x10 1x2 9x6 22x20 5x2 - 5x2 9x6 - 1x2 7x4
5x1 3x1 21x17 2x1 21x17 5x1 - 17x13 25x21 1x3 11x7
g 17x13 c27.5x25 8x5 c25.5x23 9x5 17x13 - 19x15 13x9 c17x15
11x7 3x1 19x15 2x1 15x11 5x1 23x19 19x15 - 3x1 3x1
9x6 - 17x14 - 15x12 1x2 1x2 13x10 - - 9x6
c5.5x5 11x7 c19x17 4x1 c17x15 7x3 11x7 c17x15 3x1 9x5 -
9x5 3x1 17x13 2x1 19x15 1x3 5x1 19x15 3x1 7x3 19x15
1x1 23x19 c23.5x21 10x7 c23x21 11x7 9x5 c23.5x21 13x9 17x13 c17x15
7x4 - 31x28 - 29x26 1x2 1x2 29x26 - 9x6 15x12
c5.5x5 15x11 c3.5x3 6x3 c7.5x7 4x1 13x9 1x1 13x9 21x17 c15x13`.trim().split('\n').map(r => r.split(' '));
const vx = [1137.5, 1179.5, 1221.5, 1263.5, 1304.5, 1346.5, 1388.5, 1430.5, 1472.5, 1514.5, 1556.5];
const hy = [247.5, 285.5, 324.5, 362.5, 400.5, 438.5, 477.5, 515.5, 553.5, 591.5, 630.5, 668.5, 706.5, 744.5, 783.5, 821.5];
const cx = [1158.5, 1200.5, 1242.5, 1284, 1325.5, 1367.5, 1409.5, 1451.5, 1493.5, 1535.5, 1577.5];
const cy = [266.5, 305, 343.5, 381.5, 419.5, 458, 496.5, 534.5, 572.5, 611, 649.5, 687.5, 725.5, 764, 802.5];
const scale = [[0, 200], [11, 194], [15, 179], [19, 161], [23, 141], [25, 130], [29, 105], [31, 82]];
function tone(s) {
  for (let i = 1; i < scale.length; i++) if (s <= scale[i][0]) {
    const [a, u] = scale[i - 1], [b, v] = scale[i];
    const k = Math.round(u + (v - u) * (s - a) / (b - a));
    return `rgb(${k},${k},218)`;
  }
  return 'rgb(82,82,218)';
}
let m = '';
grid.forEach((r, j) => r.forEach((t, i) => {
  const x = cx[i], y = cy[j];
  if (t === '-') return;
  if (t === 'g') { m += `<ellipse cx="${x}" cy="${y}" rx="3.800" ry="3.500" fill="#d9d0d0"/>`; return; }
  const circle = t[0] === 'c', [w, h] = t.replace('c', '').split('x').map(Number);
  m += circle ? `<ellipse cx="${x}" cy="${y}" rx="${w / 2}" ry="${h / 2}" fill="${tone(w * 1.08)}"/>`
    : `<rect x="${Math.round(x - w / 2)}" y="${Math.round(y - h / 2)}" width="${w}" height="${h}" fill="${tone(w)}"/>`;
}));
m += line(vx.map(x => `M${x} 247V824`).join('') + hy.map(y => `M1135 ${y}H1581`).join(''));
m += line(cy.map(y => `M1132.500 ${Math.floor(y) + .5}h5`).join('') + cx.map(x => `M${Math.floor(x) + .5} 821v5`).join(''));
names.forEach((n, j) => {
  if (n === 'specialisation') m += label(1127, cy[j] - 1.5, 'specialisatio', 'end') + label(1127.5, cy[j] + 7.5, 'n', 'end');
  else m += label(1126.5, cy[j] + 3.5, n, 'end');
});
cx.forEach((x, i) => {
  m += `<text class="up" transform="translate(${x + 2} 237.500) rotate(-90)">${names[i]}</text>`;
  m += `<text class="up" transform="translate(${x + 2} 832.500) rotate(-90)" text-anchor="end">${names[i]}</text>`;
});
document.getElementById('matrix').innerHTML = m;

/* Condense labels horizontally: data-w is a target width, data-s a factor. */
document.querySelectorAll('[data-w],[data-s]').forEach(el => {
  const inner = document.createElement('span');
  inner.append(...el.childNodes);
  el.append(inner);
  el.classList.add('sq');
  const w = inner.offsetWidth && inner.getBoundingClientRect().width;
  if (!w) return;
  const k = el.dataset.w ? el.dataset.w / w : +el.dataset.s;
  el.style.width = w * k + 'px';
  inner.style.transform = `scaleX(${k})`;
});
```
